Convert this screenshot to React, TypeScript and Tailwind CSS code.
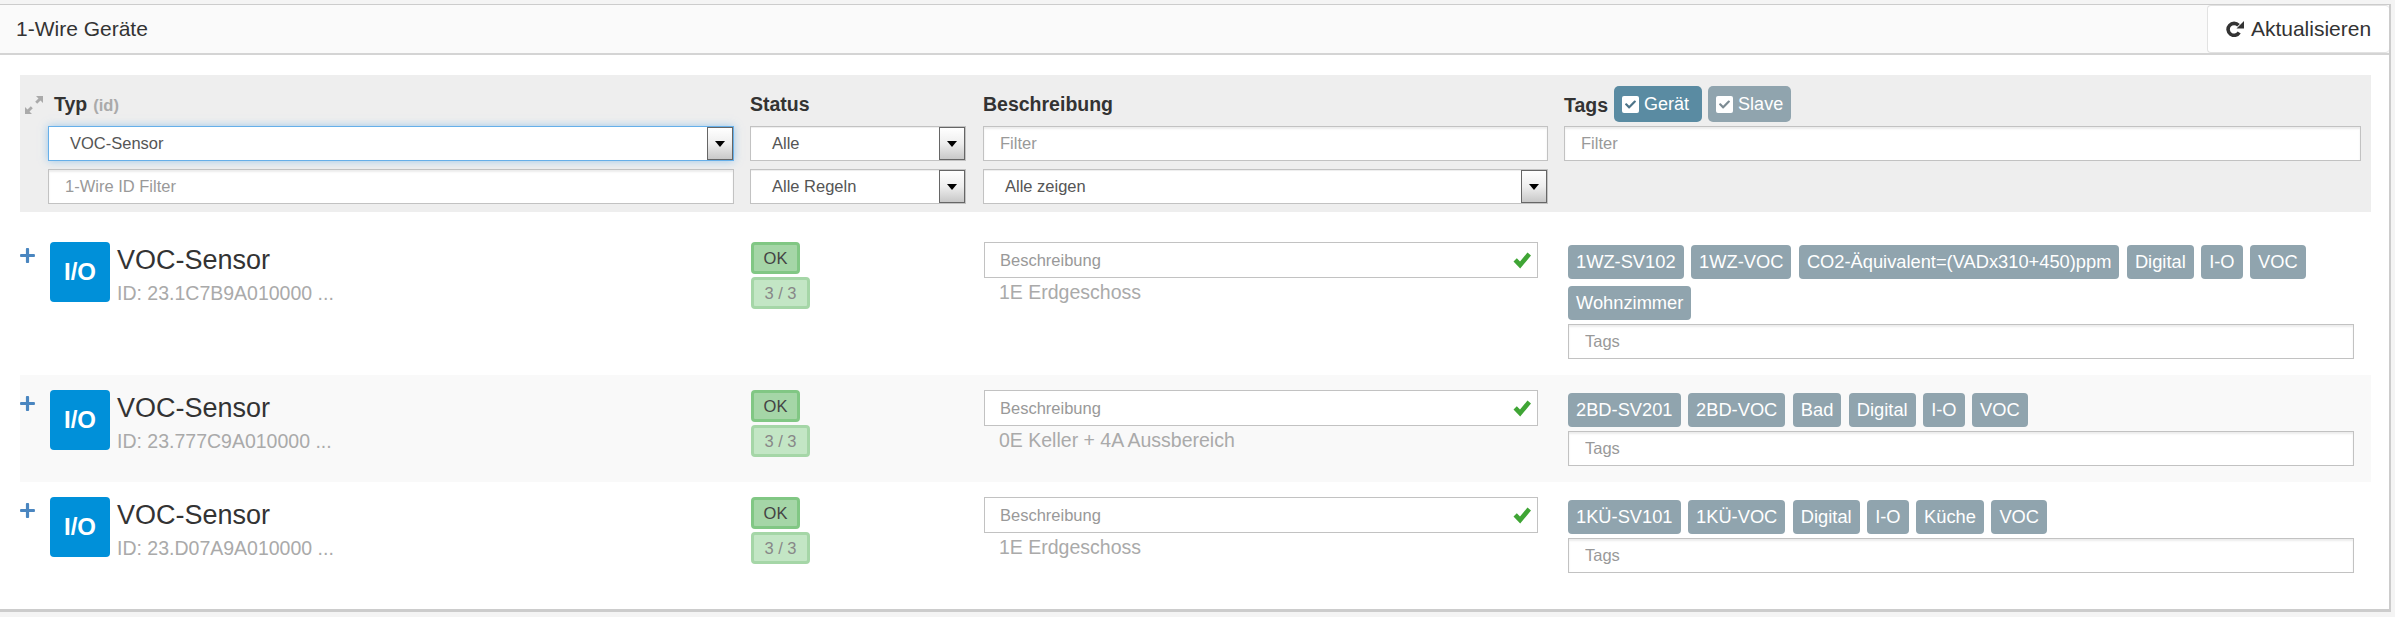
import { FaCheck, FaPlus } from 'react-icons/fa'

const rowGrid = 'grid grid-cols-[730px_233px_581px_1fr]'

function SelectBox({ value, focus }: { value: string; focus?: boolean }) {
  return (
    <div
      className={`flex h-[35px] w-full items-stretch bg-white text-[16.5px] text-[#555] ${
        focus
          ? 'border border-[#66afe9] shadow-[0_0_8px_rgba(102,175,233,0.6)]'
          : 'border border-[#c2c2c2] shadow-[inset_0_1px_1px_rgba(0,0,0,0.075)]'
      }`}
    >
      <span className="flex flex-1 items-center pl-[21px]">{value}</span>
      <span className="flex w-[26px] items-center justify-center border border-[#666] bg-gradient-to-b from-white via-[#eee] to-[#c8c8c8]">
        <span className="h-0 w-0 border-x-[5px] border-t-[6px] border-x-transparent border-t-black" />
      </span>
    </div>
  )
}

function TextBox({ placeholder }: { placeholder: string }) {
  return (
    <input
      type="text"
      placeholder={placeholder}
      className="h-[35px] w-full border border-[#c2c2c2] bg-white px-[16px] text-[16.5px] text-[#555] shadow-[inset_0_2px_2px_rgba(0,0,0,0.075)] outline-none placeholder:text-[#999]"
    />
  )
}

function Tag({ label }: { label: string }) {
  return (
    <span className="flex h-[34px] items-center rounded-[4px] bg-[#90a4ae] px-[8px] text-[18.3px] text-white">
      {label}
    </span>
  )
}

function FilterToggle({ label, color, check, pad }: { label: string; color: string; check: string; pad: string }) {
  return (
    <span className={`flex h-[36px] items-center gap-[5px] rounded-[5px] pl-[8px] text-[18px] text-white ${color} ${pad}`}>
      <span className={`flex h-[17px] w-[17px] items-center justify-center rounded-[2px] bg-white ${check}`}>
        <FaCheck className="h-[11px] w-[11px]" />
      </span>
      {label}
    </span>
  )
}

function DeviceRow({
  id,
  floor,
  tags,
  striped,
  first,
}: {
  id: string
  floor: string
  tags: string[]
  striped?: boolean
  first?: boolean
}) {
  return (
    <div className={`${rowGrid} pt-[15px] ${first ? 'mt-[15px] h-[148px]' : 'h-[107px]'} ${striped ? 'bg-[#f9f9f9]' : ''}`}>
      <div className="flex items-start">
        <FaPlus className="mt-[5px] -ml-px h-[17px] w-[17px] text-[#4a86c0]" />
        <div className="ml-[14px] flex h-[60px] w-[60px] items-center justify-center rounded-[4px] bg-[#0090d9] text-[24px] font-bold text-white">
          I/O
        </div>
        <div className="ml-[7px] flex flex-col">
          <span className="mt-[-1px] text-[27px] leading-[38px] text-[#333]">VOC-Sensor</span>
          <span className="mt-[2px] text-[19.5px] leading-[24px] text-[#aaa]">ID: {id} ...</span>
        </div>
      </div>
      <div className="flex flex-col items-start gap-[3px] pl-[1px]">
        <span className="flex h-[32px] w-[49px] items-center justify-center rounded-[4px] border-[3px] border-[#81c784] bg-[#a5d6a7] text-[16.5px] text-[#444]">
          OK
        </span>
        <span className="flex h-[32px] w-[59px] items-center justify-center rounded-[4px] border-[3px] border-[#a5d6a7] bg-[#c3e6c5] text-[16.5px] text-[#888]">
          3 / 3
        </span>
      </div>
      <div className="pl-px pr-[26px]">
        <div className="flex h-[36px] items-center border border-[#c2c2c2] bg-white pr-[6px]">
          <input
            type="text"
            placeholder="Beschreibung"
            className="min-w-0 flex-1 bg-transparent pl-[15px] text-[16.5px] outline-none placeholder:text-[#999]"
          />
          <svg viewBox="0 0 18 17" className="h-[17px] w-[18px] text-[#3fa535]" fill="currentColor">
            <path d="M0.500 9.500 L3.800 6.300 L7 9.500 L14.500 0.500 L18 3.500 L7.200 16.500 Z" />
          </svg>
        </div>
        <p className="pl-[15px] pt-[1px] text-[19.5px] leading-[27px] text-[#aaa]">{floor}</p>
      </div>
      <div className="pl-[4px] pr-[17px] pt-[3px]">
        <div className="flex flex-wrap gap-x-[7.5px] gap-y-[7px]">
          {tags.map((t) => (
            <Tag key={t} label={t} />
          ))}
        </div>
        <div className="mt-[4px]">
          <TextBox placeholder="Tags" />
        </div>
      </div>
    </div>
  )
}

export default function App() {
  return (
    <div className="h-[617px] w-[2395px] overflow-hidden bg-[#f4f4f4] pt-[4px] font-['Liberation_Sans',Arial,sans-serif]">
      <div className="h-[608px] w-[2391px] border-t border-r-2 border-b-[3px] border-[#ccc] bg-white">
        <div className="flex h-[50px] items-stretch justify-between border-b-2 border-[#d4d4d4] bg-[#fafafa]">
          <h3 className="flex items-center pl-[16px] text-[21px] text-[#333]">1-Wire Geräte</h3>
          <button className="flex w-[182px] items-center justify-center gap-[7px] rounded-[4px] border border-r-0 border-[#e2e2e2] bg-white text-[21px] text-[#333]">
            <svg viewBox="0 0 18 16" className="h-[16px] w-[18px]" fill="none">
              <path d="M12.500 4.300 A6 6 0 1 0 13.200 11.500" stroke="currentColor" strokeWidth="3.600" />
              <path d="M18 0 V7.500 H10.500 Z" fill="currentColor" />
            </svg>
            Aktualisieren
          </button>
        </div>

        <div className="ml-[20px] mr-[18px] mt-[20px]">
          <div className={`${rowGrid} h-[137px] bg-[#eee] pt-[11px]`}>
            <div className="pr-[16px]">
              <div className="flex h-[40px] items-center pb-[2px] pl-[5px] text-[19.5px] font-bold text-[#333]">
                <svg viewBox="0 0 18 18" className="mr-[11px] h-[18px] w-[18px] text-[#aaa]" fill="currentColor">
                  <path d="M11 0h7v7l-2.500-2.500-3.300 3.300-2-2 3.300-3.300zM0 18v-7l2.500 2.500 3.300-3.300 2 2-3.300 3.300L7 18z" />
                </svg>
                Typ
                <span className="ml-[6px] text-[16.5px] text-[#aaa]">(id)</span>
              </div>
              <div className="ml-[28px]">
                <SelectBox value="VOC-Sensor" focus />
                <div className="mt-[8px]">
                  <TextBox placeholder="1-Wire ID Filter" />
                </div>
              </div>
            </div>
            <div className="pr-[17px]">
              <div className="flex h-[40px] items-center pb-[2px] text-[19.5px] font-bold text-[#333]">Status</div>
              <SelectBox value="Alle" />
              <div className="mt-[8px]">
                <SelectBox value="Alle Regeln" />
              </div>
            </div>
            <div className="pr-[16px]">
              <div className="flex h-[40px] items-center pb-[2px] text-[19.5px] font-bold text-[#333]">Beschreibung</div>
              <TextBox placeholder="Filter" />
              <div className="mt-[8px]">
                <SelectBox value="Alle zeigen" />
              </div>
            </div>
            <div className="pr-[10px]">
              <div className="flex h-[40px] items-start gap-[6px]">
                <span className="pt-[5px] text-[19.5px] font-bold text-[#333]">Tags</span>
                <FilterToggle label="Gerät" color="bg-[#5a8ba2]" check="text-[#4d7488]" pad="pr-[13px]" />
                <FilterToggle label="Slave" color="bg-[#90a4ae]" check="text-[#7c8b93]" pad="pr-[8px]" />
              </div>
              <TextBox placeholder="Filter" />
            </div>
          </div>

          <DeviceRow
            first
            id="23.1C7B9A010000"
            floor="1E Erdgeschoss"
            tags={['1WZ-SV102', '1WZ-VOC', 'CO2-Äquivalent=(VADx310+450)ppm', 'Digital', 'I-O', 'VOC', 'Wohnzimmer']}
          />
          <DeviceRow
            striped
            id="23.777C9A010000"
            floor="0E Keller + 4A Aussbereich"
            tags={['2BD-SV201', '2BD-VOC', 'Bad', 'Digital', 'I-O', 'VOC']}
          />
          <DeviceRow
            id="23.D07A9A010000"
            floor="1E Erdgeschoss"
            tags={['1KÜ-SV101', '1KÜ-VOC', 'Digital', 'I-O', 'Küche', 'VOC']}
          />
        </div>
      </div>
    </div>
  )
}
